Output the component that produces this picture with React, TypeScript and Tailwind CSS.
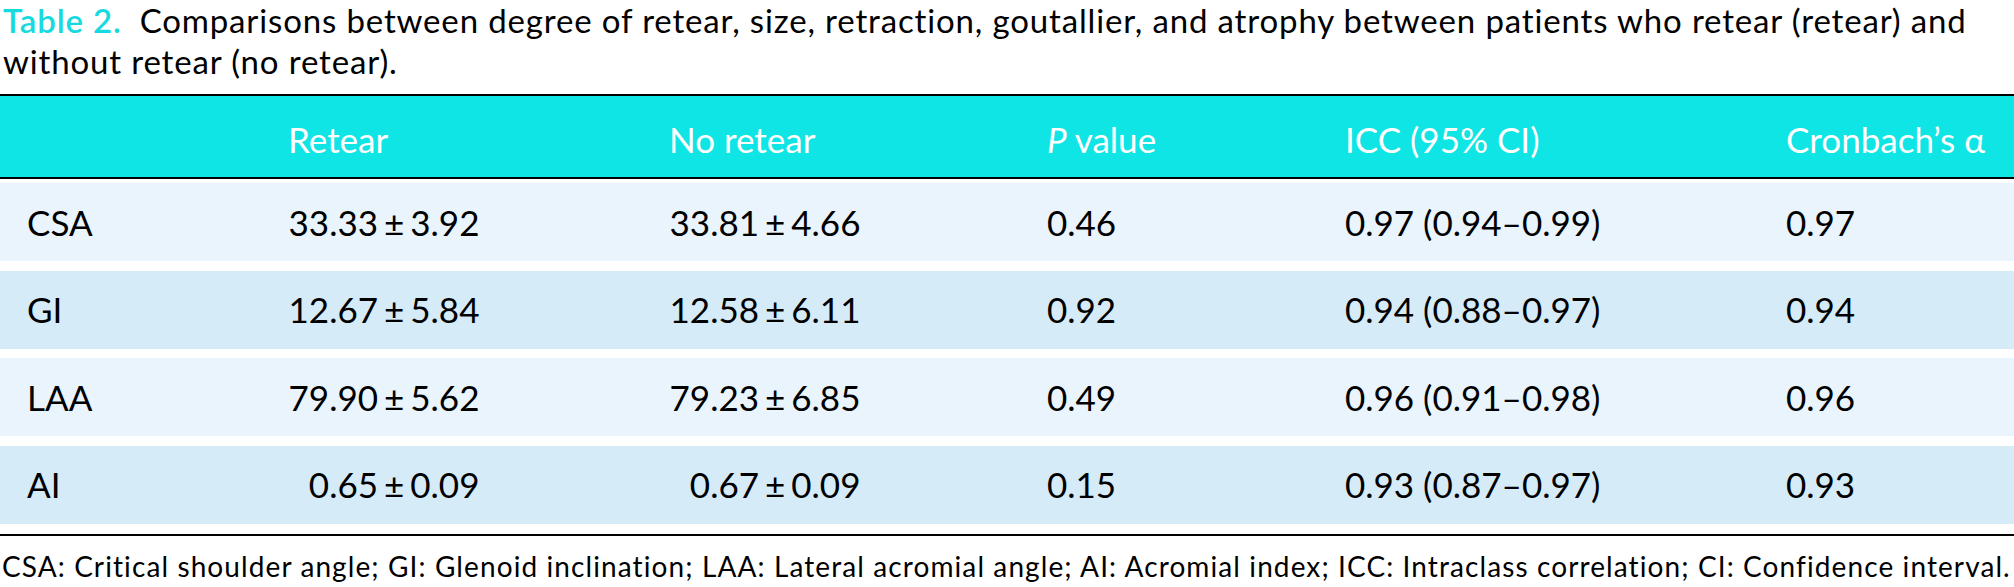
import React from "react";

type Row = {
  label: string;
  retear: [string, string];
  noRetear: [string, string];
  p: string;
  icc: string;
  alpha: string;
};

const rows: Row[] = [
  { label: "CSA", retear: ["33.33", "3.92"], noRetear: ["33.81", "4.66"], p: "0.46", icc: "0.97 (0.94–0.99)", alpha: "0.97" },
  { label: "GI", retear: ["12.67", "5.84"], noRetear: ["12.58", "6.11"], p: "0.92", icc: "0.94 (0.88–0.97)", alpha: "0.94" },
  { label: "LAA", retear: ["79.90", "5.62"], noRetear: ["79.23", "6.85"], p: "0.49", icc: "0.96 (0.91–0.98)", alpha: "0.96" },
  { label: "AI", retear: ["0.65", "0.09"], noRetear: ["0.67", "0.09"], p: "0.15", icc: "0.93 (0.87–0.97)", alpha: "0.93" },
];

function PlusMinus({ v }: { v: [string, string] }) {
  return (
    <span className="inline-flex items-baseline whitespace-nowrap">
      <span className="inline-block w-[90px] text-right">{v[0]}</span>
      <span className="ml-[6px]">±</span>
      <span className="ml-[6px]">{v[1]}</span>
    </span>
  );
}

const gridCols = "grid grid-cols-[261px_381px_378px_298px_441px_1fr] pl-[27px]";

export default function App() {
  return (
    <div className="w-[2014px] h-[587px] overflow-hidden bg-white text-black [font-family:Lato,'Noto_Sans',sans-serif]">
      <p className="text-[33px] leading-[41px] tracking-[0.85px] pl-[3px] whitespace-nowrap">
        <span className="text-[#17d9e0] font-semibold">Table 2.</span>
        <span className="ml-[18px]">
          Comparisons between degree of retear, size, retraction, goutallier, and atrophy between patients who retear (retear) and
        </span>
        <br />
        without retear (no retear).
      </p>

      <div className={`mt-[12px] h-[85px] border-t-2 border-b-2 border-black bg-[#0fe5e5] pt-[5px] text-white text-[35px] leading-[35px] items-center ${gridCols}`}>
        <div></div>
        <div>Retear</div>
        <div>No retear</div>
        <div>
          <span className="italic">P</span> value
        </div>
        <div>ICC (95% CI)</div>
        <div>Cronbach’s α</div>
      </div>

      <div className="mt-[4px] flex flex-col gap-[9.67px]">
        {rows.map((r, i) => (
          <div
            key={r.label}
            className={`h-[78px] items-center text-[35px] leading-[35px] ${gridCols} ${
              i % 2 === 0 ? "bg-[#eaf4fc]" : "bg-[#d6ebf8]"
            }`}
          >
            <div>{r.label}</div>
            <div>
              <PlusMinus v={r.retear} />
            </div>
            <div>
              <PlusMinus v={r.noRetear} />
            </div>
            <div>{r.p}</div>
            <div className="whitespace-nowrap">{r.icc}</div>
            <div>{r.alpha}</div>
          </div>
        ))}
      </div>

      <div className="mt-[10px] border-t-2 border-black pt-[14px] text-[28px] leading-[32px] tracking-[1.1px] pl-[2px] whitespace-nowrap">
        CSA: Critical shoulder angle; GI: Glenoid inclination; LAA: Lateral acromial angle; AI: Acromial index; ICC: Intraclass correlation; CI: Confidence interval.
      </div>
    </div>
  );
}
